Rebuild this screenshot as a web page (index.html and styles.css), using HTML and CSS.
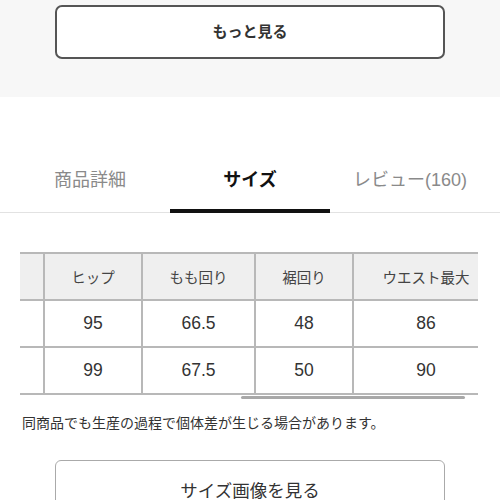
FILE: index.html
```html
<!DOCTYPE html>
<html lang="ja">
<head>
<meta charset="utf-8">
<link rel="stylesheet" href="styles.css">
</head>
<body>
<div class="top">
  <div class="more-btn">もっと見る</div>
</div>
<div class="tabs">
  <div class="tab">商品詳細</div>
  <div class="tab active">サイズ</div>
  <div class="tab">レビュー(160)</div>
</div>
<div class="size-area">
  <div class="scroll">
    <table class="size-table">
      <colgroup>
        <col class="c0"><col class="c1"><col class="c2"><col class="c3"><col class="c4">
      </colgroup>
      <tr class="head">
        <th></th>
        <th>ヒップ</th>
        <th>もも回り</th>
        <th>裾回り</th>
        <th>ウエスト最大</th>
      </tr>
      <tr>
        <td></td>
        <td>95</td>
        <td>66.5</td>
        <td>48</td>
        <td>86</td>
      </tr>
      <tr>
        <td></td>
        <td>99</td>
        <td>67.5</td>
        <td>50</td>
        <td>90</td>
      </tr>
    </table>
  </div>
  <div class="bar"><div class="thumb"></div></div>
  <p class="note">同商品でも生産の過程で個体差が生じる場合があります。</p>
  <div class="img-btn">サイズ画像を見る</div>
</div>
</body>
</html>
```
FILE: styles.css
```css
html, body {
  margin: 0;
  padding: 0;
  background: #fff;
  font-family: "Liberation Sans", "Noto Sans CJK JP", sans-serif;
  color: #333;
}
.top {
  background: #f7f7f7;
  height: 97px;
  padding-top: 5px;
  box-sizing: border-box;
}
.more-btn {
  margin: 0 55px;
  height: 54px;
  box-sizing: border-box;
  border: 2px solid #555;
  border-radius: 7px;
  background: #fff;
  display: flex;
  align-items: center;
  justify-content: center;
  padding-bottom: 3px;
  font-weight: bold;
  font-size: 15px;
  color: #333;
}
.tabs {
  margin-top: 67px;
  padding-left: 10px;
  display: flex;
  border-bottom: 1px solid #e2e2e2;
}
.tab {
  width: 160px;
  padding: 5px 0 21px;
  line-height: 22px;
  font-size: 18px;
  text-align: center;
  color: #8a8a8a;
  position: relative;
}
.tab.active {
  color: #111;
  font-weight: bold;
}
.tab.active::after {
  content: "";
  position: absolute;
  left: 0;
  right: 0;
  bottom: -1px;
  height: 4px;
  background: #111;
}
.size-area {
  padding-top: 39px;
}
.scroll {
  margin: 0 22px 0 20px;
  overflow: hidden;
}
.size-table {
  border-collapse: collapse;
  margin-left: -77px;
  table-layout: fixed;
  width: 555px;
}
.c0 { width: 100px; }
.c1 { width: 98px; }
.c2 { width: 113px; }
.c3 { width: 98px; }
.c4 { width: 146px; }
.size-table th, .size-table td {
  border: 2px solid #b8b8b8;
  text-align: center;
  padding: 0;
  white-space: nowrap;
}
.size-table th {
  background: #efefef;
  font-weight: normal;
  font-size: 14.5px;
  color: #444;
  height: 45px;
}
.size-table td {
  font-size: 17.5px;
  color: #333;
  height: 45px;
}
.bar {
  height: 6px;
  margin: 1px 22px 0 20px;
}
.thumb {
  margin-left: 221px;
  width: 224px;
  height: 3px;
  border-radius: 2px;
  background: #a8a8a8;
}
.note {
  margin: 12px 0 0 22px;
  font-size: 14px;
  line-height: 18px;
  color: #333;
}
.img-btn {
  margin: 28px 55px 0;
  height: 62px;
  box-sizing: border-box;
  border: 1.5px solid #aaa;
  border-radius: 6px;
  display: flex;
  align-items: center;
  justify-content: center;
  padding-bottom: 4px;
  font-size: 17.5px;
  color: #333;
}
```
